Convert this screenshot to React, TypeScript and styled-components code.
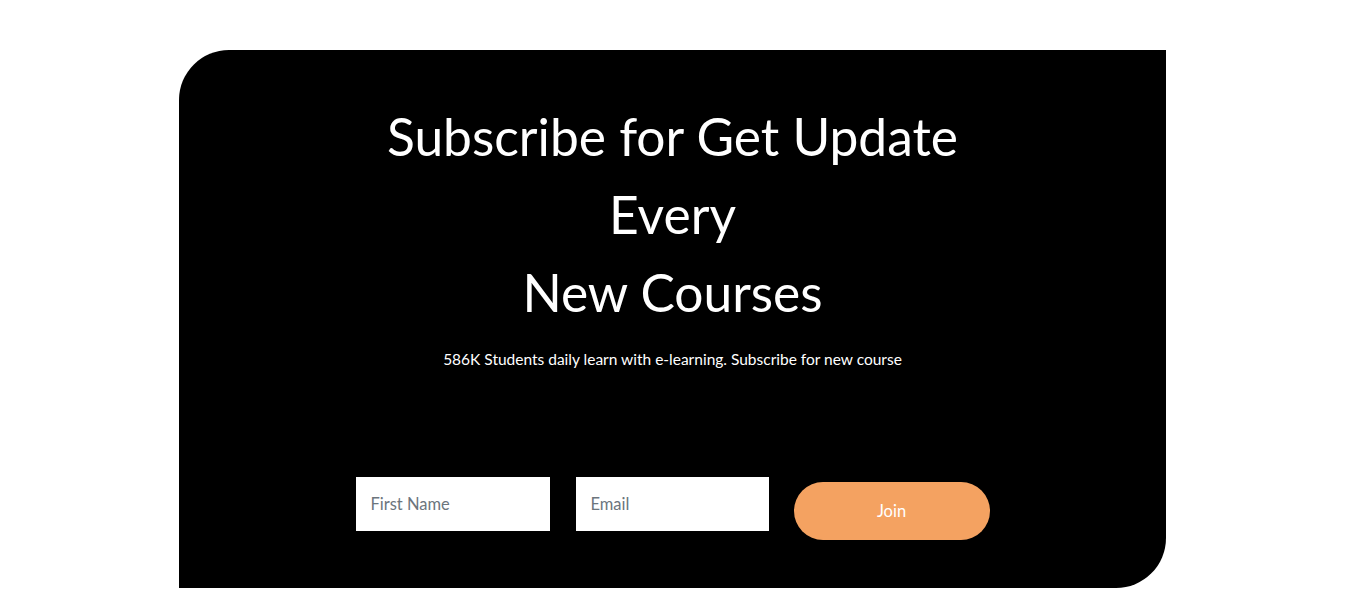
import React from "react";
import styled, { createGlobalStyle } from "styled-components";

const Global = createGlobalStyle`
  html, body { margin: 0; padding: 0; background: #ffffff; }
  body { font-family: "Lato", "Noto Sans", sans-serif; }
  * { box-sizing: border-box; }
`;

const Page = styled.div`
  width: 100%;
  padding-top: 50px;
  display: flex;
  justify-content: center;
`;

const Card = styled.section`
  width: 987px;
  height: 538px;
  background: #000000;
  border-radius: 50px 0 50px 0;
  display: flex;
  flex-direction: column;
  align-items: center;
  padding-top: 47px;
`;

const Heading = styled.h2`
  margin: 0;
  color: #ffffff;
  font-family: "Lato", "Noto Sans", sans-serif;
  font-weight: 400;
  font-size: 51.5px;
  line-height: 78px;
  text-align: center;
`;

const Sub = styled.p`
  margin: 15px 0 0;
  color: #ffffff;
  font-family: "Lato", "Noto Sans", sans-serif;
  font-size: 15.5px;
  line-height: 26px;
  text-align: center;
`;

const Form = styled.form`
  margin-top: 105px;
  display: flex;
  align-items: flex-start;
  gap: 26px;
`;

const Input = styled.input<{ $w: number }>`
  width: ${(p) => p.$w}px;
  height: 54px;
  border: none;
  outline: none;
  background: #ffffff;
  padding: 0 15px;
  font-family: "Lato", "Noto Sans", sans-serif;
  font-size: 16.5px;
  color: #333;
  border-radius: 0;
  &::placeholder { color: #6c757d; }
`;

const Button = styled.button`
  width: 196px;
  height: 58px;
  margin-top: 5px;
  margin-left: -1px;
  border: none;
  border-radius: 29px;
  background: #f4a261;
  color: #ffffff;
  font-family: "Lato", "Noto Sans", sans-serif;
  font-size: 16.5px;
  cursor: pointer;
`;

export default function App() {
  return (
    <>
      <Global />
      <Page>
        <Card>
          <Heading>
            Subscribe for Get Update
            <br />
            Every
            <br />
            New Courses
          </Heading>
          <Sub>586K Students daily learn with e-learning. Subscribe for new course</Sub>
          <Form onSubmit={(e) => e.preventDefault()}>
            <Input $w={194} type="text" placeholder="First Name" />
            <Input $w={193} type="email" placeholder="Email" />
            <Button type="submit">Join</Button>
          </Form>
        </Card>
      </Page>
    </>
  );
}
